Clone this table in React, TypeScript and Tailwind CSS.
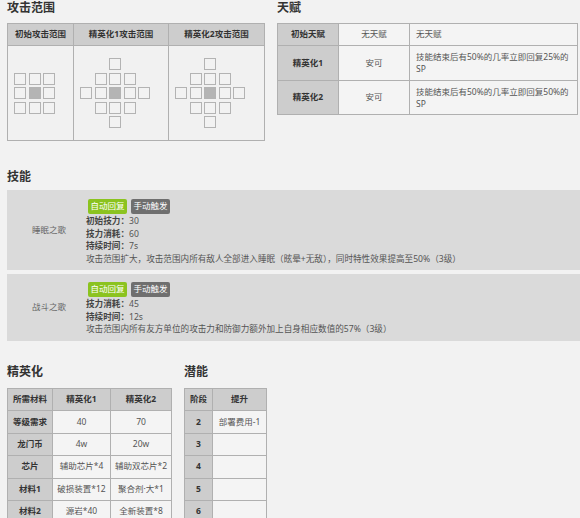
import React from "react";

const font = "font-['Noto_Sans','Noto_Sans_CJK_SC',sans-serif]";

function Sq({ k }: { k: number }) {
  if (k === 0) return <div className="w-[12px] h-[12px]" />;
  return (
    <div
      className={
        "w-[12px] h-[12px] border border-[#b3b3b3] " +
        (k === 2 ? "bg-[#b4b4b4]" : "bg-[#f2f2f2]")
      }
    />
  );
}

const g3 = [
  [1, 1, 1],
  [1, 2, 1],
  [1, 1, 1],
];
const g5 = [
  [0, 0, 1, 0, 0],
  [0, 1, 1, 1, 0],
  [1, 1, 2, 1, 1],
  [0, 1, 1, 1, 0],
  [0, 0, 1, 0, 0],
];

function Grid({ g }: { g: number[][] }) {
  const cols = g[0].length;
  return (
    <div
      className={
        "grid gap-[2.5px] " +
        (cols === 3 ? "grid-cols-[12px_12px_12px]" : "grid-cols-[12px_12px_12px_12px_12px]")
      }
    >
      {g.flat().map((k, i) => (
        <Sq key={i} k={k} />
      ))}
    </div>
  );
}

function Heading({ children }: { children: React.ReactNode }) {
  return <div className="h-[16px] leading-[16px] text-[12px] font-bold text-[#333]">{children}</div>;
}

const hd = "bg-[#cdcdcd] font-bold text-[#333] flex items-center justify-center";
const td = "bg-[#f4f4f4] text-[#555] flex items-center justify-center";

function Btns() {
  return (
    <div className="flex gap-[4px] ml-[2px]">
      <div className="w-[39px] h-[15px] rounded-[2px] bg-[#8bc31f] text-white text-[8.5px] flex items-center justify-center">
        自动回复
      </div>
      <div className="w-[39px] h-[15px] rounded-[2px] bg-[#6f6f6f] text-white text-[8.5px] flex items-center justify-center">
        手动触发
      </div>
    </div>
  );
}

function Line({ label, value }: { label: string; value: string }) {
  return (
    <div>
      <span className="font-bold text-[#444]">{label}：</span>
      <span>{value}</span>
    </div>
  );
}

export default function App() {
  return (
    <div className={"w-[580px] h-[518px] overflow-hidden bg-[#f2f2f2] pl-[7px] text-[8.5px] text-[#444] " + font}>
      {/* top */}
      <div className="flex gap-[12px]">
        <div className="w-[258px]">
          <Heading>攻击范围</Heading>
          <div className="mt-[7px] grid grid-cols-[65px_94px_95px] grid-rows-[21px_94px] gap-px p-px bg-[#b0b0b0]">
            <div className={hd}>初始攻击范围</div>
            <div className={hd}>精英化1攻击范围</div>
            <div className={hd}>精英化2攻击范围</div>
            <div className="bg-[#f1f1f1] flex items-center pl-[6px]">
              <Grid g={g3} />
            </div>
            <div className="bg-[#f1f1f1] flex items-center pl-[6px]">
              <Grid g={g5} />
            </div>
            <div className="bg-[#f1f1f1] flex items-center pl-[6px]">
              <Grid g={g5} />
            </div>
          </div>
        </div>
        <div className="w-[301px]">
          <Heading>天赋</Heading>
          <div className="mt-[7px] grid grid-cols-[60px_70px_167px] grid-rows-[21px_34px_33px] gap-px p-px bg-[#b0b0b0]">
            <div className={hd}>初始天赋</div>
            <div className={td}>无天赋</div>
            <div className="bg-[#f4f4f4] text-[#555] flex items-center pl-[6px]">无天赋</div>
            <div className={hd}>精英化1</div>
            <div className={td}>安可</div>
            <div className="bg-[#f4f4f4] text-[#555] flex items-center pl-[6px] leading-[11.7px]">
              <div>
                技能结束后有50%的几率立即回复25%的
                <br />
                SP
              </div>
            </div>
            <div className={hd}>精英化2</div>
            <div className={td}>安可</div>
            <div className="bg-[#f4f4f4] text-[#555] flex items-center pl-[6px] leading-[11.7px]">
              <div>
                技能结束后有50%的几率立即回复50%的
                <br />
                SP
              </div>
            </div>
          </div>
        </div>
      </div>

      {/* skills */}
      <div className="mt-[28px]">
        <Heading>技能</Heading>
        <div className="mt-[5px] flex flex-col gap-[4px]">
          <div className="h-[80px] bg-[#dadada] flex">
            <div className="w-[79px] pl-[5px] flex items-center justify-center text-[#666]">睡眠之歌</div>
            <div className="pt-[9px] text-[8.6px] text-[#555]">
              <Btns />
              <div className="mt-[1px] leading-[12.6px]">
                <Line label="初始技力" value="30" />
                <Line label="技力消耗" value="60" />
                <Line label="持续时间" value="7s" />
                <div>攻击范围扩大，攻击范围内所有敌人全部进入睡眠（眩晕+无敌），同时特性效果提高至50%（3级）</div>
              </div>
            </div>
          </div>
          <div className="h-[67px] bg-[#dadada] flex">
            <div className="w-[79px] pl-[5px] flex items-center justify-center text-[#666]">战斗之歌</div>
            <div className="pt-[8px] text-[8.6px] text-[#555]">
              <Btns />
              <div className="mt-[1px] leading-[12.6px]">
                <Line label="技力消耗" value="45" />
                <Line label="持续时间" value="12s" />
                <div>攻击范围内所有友方单位的攻击力和防御力额外加上自身相应数值的57%（3级）</div>
              </div>
            </div>
          </div>
        </div>
      </div>

      {/* bottom */}
      <div className="mt-[23px] flex gap-[12px]">
        <div className="w-[165px]">
          <Heading>精英化</Heading>
          <div className="mt-[8px] grid grid-cols-[44px_57px_60px] auto-rows-[21.4px] gap-px p-px bg-[#b0b0b0]">
            <div className={hd}>所需材料</div>
            <div className={hd}>精英化1</div>
            <div className={hd}>精英化2</div>
            <div className={hd}>等级需求</div>
            <div className={td}>40</div>
            <div className={td}>70</div>
            <div className={hd}>龙门币</div>
            <div className={td}>4w</div>
            <div className={td}>20w</div>
            <div className={hd}>芯片</div>
            <div className={td}>辅助芯片*4</div>
            <div className={td}>辅助双芯片*2</div>
            <div className={hd}>材料1</div>
            <div className={td}>破损装置*12</div>
            <div className={td}>聚合剂·大*1</div>
            <div className={hd}>材料2</div>
            <div className={td}>源岩*40</div>
            <div className={td}>全新装置*8</div>
          </div>
        </div>
        <div className="w-[83px]">
          <Heading>潜能</Heading>
          <div className="mt-[8px] grid grid-cols-[27px_53px] auto-rows-[21.4px] gap-px p-px bg-[#b0b0b0]">
            <div className={hd}>阶段</div>
            <div className={hd}>提升</div>
            <div className={hd}>2</div>
            <div className={td}>部署费用-1</div>
            <div className={hd}>3</div>
            <div className={td}></div>
            <div className={hd}>4</div>
            <div className={td}></div>
            <div className={hd}>5</div>
            <div className={td}></div>
            <div className={hd}>6</div>
            <div className={td}></div>
          </div>
        </div>
      </div>
    </div>
  );
}
